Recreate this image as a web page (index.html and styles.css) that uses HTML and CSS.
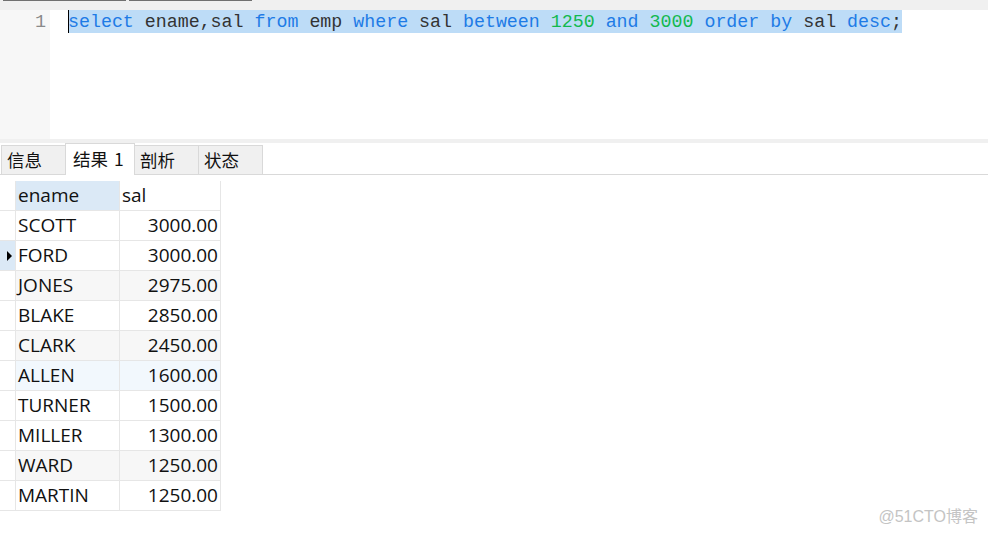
FILE: index.html
```html
<!DOCTYPE html>
<html>
<head>
<meta charset="utf-8">
<link rel="stylesheet" href="styles.css">
</head>
<body>
<div class="page">
  <div class="topbar">
    <span class="thumb t1"></span>
    <span class="thumb t2"></span>
  </div>
  <div class="editor">
    <div class="gutter"><span class="lineno">1</span></div>
    <div class="code">
      <div class="line"><span class="sel"><span class="kw">select</span> ename,sal <span class="kw">from</span> emp <span class="kw">where</span> sal <span class="kw">between</span> <span class="num">1250</span> <span class="kw">and</span> <span class="num">3000</span> <span class="kw">order</span> <span class="kw">by</span> sal <span class="kw">desc</span>;</span></div>
    </div>
  </div>
  <div class="split"></div>
  <div class="tabs">
    <div class="tab w1">信息</div>
    <div class="tab active">结果 1</div>
    <div class="tab w1">剖析</div>
    <div class="tab w1">状态</div>
  </div>
  <div class="grid">
    <div class="ind"></div><div class="hd name">ename</div><div class="hd">sal</div>

    <div class="ind"></div><div class="c">SCOTT</div><div class="c n">3000.00</div>
    <div class="ind cur"><span class="tri"></span></div><div class="c">FORD</div><div class="c n">3000.00</div>
    <div class="ind"></div><div class="c g">JONES</div><div class="c n g">2975.00</div>
    <div class="ind"></div><div class="c">BLAKE</div><div class="c n">2850.00</div>
    <div class="ind"></div><div class="c g">CLARK</div><div class="c n g">2450.00</div>
    <div class="ind"></div><div class="c b">ALLEN</div><div class="c n b">1600.00</div>
    <div class="ind"></div><div class="c">TURNER</div><div class="c n">1500.00</div>
    <div class="ind"></div><div class="c">MILLER</div><div class="c n">1300.00</div>
    <div class="ind"></div><div class="c g">WARD</div><div class="c n g">1250.00</div>
    <div class="ind"></div><div class="c">MARTIN</div><div class="c n">1250.00</div>
  </div>
  <div class="wm">@51CTO博客</div>
</div>
</body>
</html>
```

FILE: styles.css
```css
html, body {
  margin: 0;
  padding: 0;
  background: #ffffff;
}
.page {
  position: relative;
  width: 988px;
  height: 536px;
  overflow: hidden;
  display: flex;
  flex-direction: column;
}
.topbar {
  height: 10px;
  background: #f0f0f0;
  display: flex;
  gap: 3px;
  padding-left: 3px;
  align-items: flex-start;
  flex: none;
}
.thumb {
  display: block;
  height: 1px;
  width: 123px;
  background: #707070;
}
.editor {
  height: 129px;
  display: flex;
  flex: none;
}
.gutter {
  width: 50px;
  background: #f7f7f7;
  text-align: right;
  box-sizing: border-box;
  padding-right: 4px;
}
.lineno {
  display: block;
  font-family: "Liberation Mono", "DejaVu Sans Mono", monospace;
  font-size: 18.5px;
  line-height: 23px;
  padding-top: 1px;
  color: #8a8a8a;
}
.code {
  flex: 1;
  padding-left: 18px;
}
.line {
  font-family: "Liberation Mono", "DejaVu Sans Mono", monospace;
  font-size: 18.3px;
  line-height: 23px;
  color: #333333;
  white-space: pre;
}
.sel {
  background: #bddcf7;
  box-shadow: inset 1px 0 0 #000;
  display: inline-block;
  padding-top: 1px;
  line-height: 22px;
}
.kw { color: #1e7be6; }
.num { color: #13b94f; }
.split {
  height: 4px;
  background: #f0f0f0;
  flex: none;
}
.tabs {
  height: 31px;
  border-bottom: 1px solid #d9d9d9;
  display: flex;
  align-items: flex-end;
  padding-left: 1px;
  flex: none;
}
.tab {
  font-family: "Noto Sans CJK SC", "Microsoft YaHei", sans-serif;
  font-size: 17.5px;
  color: #111;
  box-sizing: border-box;
  height: 29px;
  line-height: 28px;
  padding-left: 5px;
  background: #f0f0f0;
  border: 1px solid #d9d9d9;
  border-bottom: none;
  margin-right: -1px;
}
.tab.w1 { width: 65px; }
.tab.active {
  width: 70px;
  line-height: 30px;
  background: #ffffff;
  padding-left: 7px;
  margin-bottom: -1px;
  height: 32px;
  position: relative;
  z-index: 1;
  word-spacing: 2px;
}
.grid {
  margin-top: 6px;
  display: grid;
  grid-template-columns: 16px 104px 101px;
  grid-auto-rows: 30px;
  font-family: "Open Sans", "Noto Sans", sans-serif;
  font-size: 19px;
  color: #111;
}
.grid > div {
  box-sizing: border-box;
  border-right: 1px solid #e6e6e6;
  border-bottom: 1px solid #e6e6e6;
  line-height: 28px;
}
.ind {
  background: #ffffff;
  display: flex;
  align-items: center;
  padding-left: 7px;
}
.ind.cur { background: #dbe9f6; }
.tri {
  width: 0;
  height: 0;
  border-top: 5px solid transparent;
  border-bottom: 5px solid transparent;
  border-left: 5px solid #000;
}
.hd {
  padding-left: 2px;
  background: #ffffff;
}
.hd.name { background: #dbe9f6; }
.c {
  padding-left: 2px;
  background: #ffffff;
}
.c.n {
  text-align: right;
  padding-right: 2px;
}
.c.g { background: #f7f7f7; }
.c.b { background: #f2f8fd; }
.wm {
  position: absolute;
  right: 10px;
  bottom: 9px;
  font-family: "Liberation Sans", "Noto Sans CJK SC", sans-serif;
  font-size: 16px;
  color: #c4c4c4;
}
```
